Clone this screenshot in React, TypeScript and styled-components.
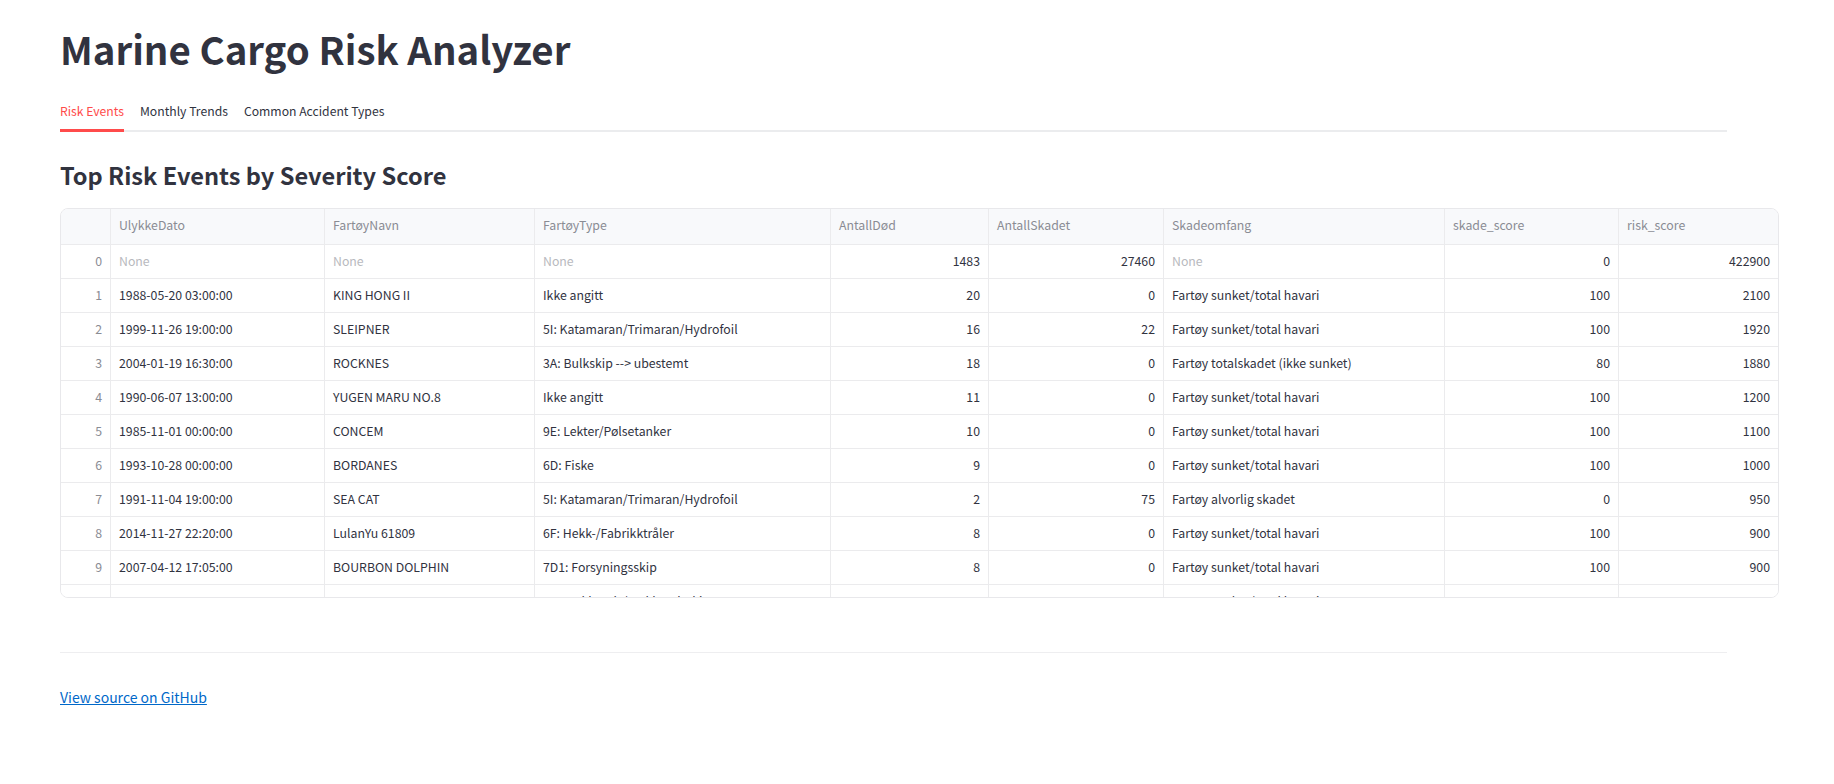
import React from "react";
import styled, { createGlobalStyle } from "styled-components";

const GlobalStyle = createGlobalStyle`
  html, body {
    margin: 0;
    padding: 0;
    background: #ffffff;
  }
  body {
    font-family: "Source Sans Pro", "Noto Sans CJK SC", sans-serif;
    color: #31333f;
    -webkit-font-smoothing: antialiased;
  }
  * { box-sizing: border-box; }
`;

const Main = styled.main`
  width: 1727px;
  padding: 25px 0 0 60px;
  display: flex;
  flex-direction: column;
  align-items: flex-start;
`;

const Title = styled.h1`
  margin: 0;
  font-size: 38.4px;
  font-weight: 700;
  line-height: 46px;
  color: #31333f;
`;

const TabList = styled.div`
  margin-top: 31px;
  align-self: stretch;
  display: flex;
  gap: 16px;
  border-bottom: 2px solid #ebecee;
`;

const Tab = styled.div<{ $active?: boolean }>`
  font-size: 12.2px;
  line-height: 18px;
  padding-bottom: 9px;
  margin-bottom: -2px;
  border-bottom: 3px solid ${(p) => (p.$active ? "#ff4b4b" : "transparent")};
  color: ${(p) => (p.$active ? "#ff4b4b" : "#31333f")};
  white-space: nowrap;
`;

const SubHeader = styled.h3`
  margin: 28px 0 0;
  font-size: 23.6px;
  font-weight: 600;
  line-height: 30px;
  color: #31333f;
`;

const Grid = styled.div`
  margin-top: 18px;
  width: 1719px;
  height: 390px;
  border: 1px solid #e8e8eb;
  border-radius: 8px;
  overflow: hidden;
  background: #ffffff;
`;

const COLS = "50px 214px 210px 296px 158px 175px 281px 174px 159px";

const Row = styled.div<{ $header?: boolean }>`
  display: grid;
  grid-template-columns: ${COLS};
  height: ${(p) => (p.$header ? 36 : 34)}px;
  background: ${(p) => (p.$header ? "#f8f9fb" : "#ffffff")};
  border-bottom: 1px solid #ebebed;
`;

type Kind = "text" | "num" | "none" | "index" | "head";

const Cell = styled.div<{ $kind: Kind; $last?: boolean; $header?: boolean }>`
  font-size: 12.3px;
  line-height: 18px;
  padding: 7px 8px 0;
  border-right: ${(p) => (p.$last ? "none" : "1px solid #ebebed")};
  white-space: nowrap;
  overflow: hidden;
  text-align: ${(p) => (p.$kind === "num" || p.$kind === "index" ? "right" : "left")};
  color: ${(p) =>
    p.$kind === "none"
      ? "#b8b9be"
      : p.$kind === "index" || p.$kind === "head"
      ? "#8a8c94"
      : "#31333f"};
`;

const Divider = styled.hr`
  margin: 54px 0 0;
  align-self: stretch;
  border: none;
  border-top: 1px solid #eeeef0;
  height: 0;
`;

const Link = styled.a`
  margin-top: 34px;
  font-size: 14px;
  line-height: 20px;
  color: #0068c9;
  text-decoration: underline;
`;

const headers = [
  "",
  "UlykkeDato",
  "FartøyNavn",
  "FartøyType",
  "AntallDød",
  "AntallSkadet",
  "Skadeomfang",
  "skade_score",
  "risk_score",
];

type Rec = [string | null, string | null, string | null, number, number, string | null, number, number];

const rows: Rec[] = [
  [null, null, null, 1483, 27460, null, 0, 422900],
  ["1988-05-20 03:00:00", "KING HONG II", "Ikke angitt", 20, 0, "Fartøy sunket/total havari", 100, 2100],
  ["1999-11-26 19:00:00", "SLEIPNER", "5I: Katamaran/Trimaran/Hydrofoil", 16, 22, "Fartøy sunket/total havari", 100, 1920],
  ["2004-01-19 16:30:00", "ROCKNES", "3A: Bulkskip --> ubestemt", 18, 0, "Fartøy totalskadet (ikke sunket)", 80, 1880],
  ["1990-06-07 13:00:00", "YUGEN MARU NO.8", "Ikke angitt", 11, 0, "Fartøy sunket/total havari", 100, 1200],
  ["1985-11-01 00:00:00", "CONCEM", "9E: Lekter/Pølsetanker", 10, 0, "Fartøy sunket/total havari", 100, 1100],
  ["1993-10-28 00:00:00", "BORDANES", "6D: Fiske", 9, 0, "Fartøy sunket/total havari", 100, 1000],
  ["1991-11-04 19:00:00", "SEA CAT", "5I: Katamaran/Trimaran/Hydrofoil", 2, 75, "Fartøy alvorlig skadet", 0, 950],
  ["2014-11-27 22:20:00", "LulanYu 61809", "6F: Hekk-/Fabrikktråler", 8, 0, "Fartøy sunket/total havari", 100, 900],
  ["2007-04-12 17:05:00", "BOURBON DOLPHIN", "7D1: Forsyningsskip", 8, 0, "Fartøy sunket/total havari", 100, 900],
  ["1986-02-11 10:00:00", "SKAGERAK", "1A: Stykkgods/Stykkgodsskip", 7, 0, "Fartøy sunket/total havari", 100, 800],
];

const kinds: Kind[] = ["text", "text", "text", "num", "num", "text", "num", "num"];

function DataRow({ rec, idx }: { rec: Rec; idx: number }) {
  return (
    <Row>
      <Cell $kind="index">{idx}</Cell>
      {rec.map((v, i) => {
        const isNone = v === null;
        return (
          <Cell key={i} $kind={isNone ? "none" : kinds[i]} $last={i === rec.length - 1}>
            {isNone ? "None" : String(v)}
          </Cell>
        );
      })}
    </Row>
  );
}

export default function App() {
  return (
    <>
      <GlobalStyle />
      <Main>
        <Title>Marine Cargo Risk Analyzer</Title>
        <TabList>
          <Tab $active>Risk Events</Tab>
          <Tab>Monthly Trends</Tab>
          <Tab>Common Accident Types</Tab>
        </TabList>
        <SubHeader>Top Risk Events by Severity Score</SubHeader>
        <Grid>
          <Row $header>
            {headers.map((h, i) => (
              <Cell key={i} $kind="head" $header $last={i === headers.length - 1}>
                {h}
              </Cell>
            ))}
          </Row>
          {rows.map((r, i) => (
            <DataRow key={i} rec={r} idx={i} />
          ))}
        </Grid>
        <Divider />
        <Link href="#">View source on GitHub</Link>
      </Main>
    </>
  );
}
